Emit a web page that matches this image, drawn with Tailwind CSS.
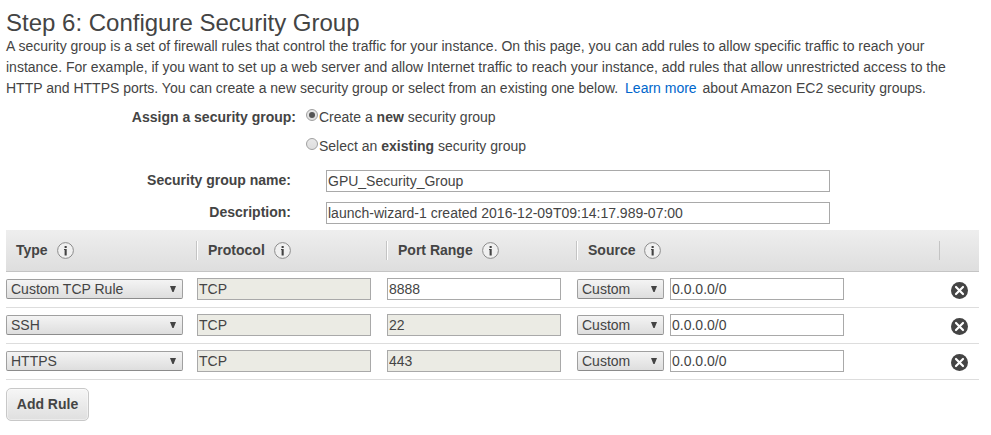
<!DOCTYPE html>
<html lang="en">
<head>
<meta charset="utf-8">
<title>Configure Security Group</title>
<script src="https://cdn.jsdelivr.net/npm/@tailwindcss/browser@4"></script>
</head>
<body class="bg-white text-[#444] text-sm leading-[21px] font-['Liberation_Sans',Arial,sans-serif] overflow-hidden">
<svg class="hidden">
  <symbol id="info" viewBox="0 0 17 17">
    <circle cx="8.5" cy="8.5" r="7.9" fill="#f0f0f0" stroke="#8c8c8c"/>
    <path d="M7.6 4h2.1v2H7.6zM7 7.1h2.7V13.4H7.6V8H7z" fill="#444"/>
  </symbol>
  <symbol id="remove" viewBox="0 0 17 17">
    <circle cx="8.5" cy="8.5" r="8.5" fill="#444"/>
    <path d="M5 5l7 7M12 5l-7 7" stroke="#fff" stroke-width="2.2" stroke-linecap="round"/>
  </symbol>
  <symbol id="arrow" viewBox="0 0 6 6"><path d="M0 0h6L3.6 6H2.4z" fill="#444"/></symbol>
</svg>
<main class="pl-1.5 pr-3 pt-[9px]">
  <h1 class="text-2xl leading-[27px]">Step 6: Configure Security Group</h1>
  <p class="whitespace-nowrap">A security group is a set of firewall rules that control the traffic for your instance. On this page, you can add rules to allow specific traffic to reach your<br>instance. For example, if you want to set up a web server and allow Internet traffic to reach your instance, add rules that allow unrestricted access to the<br>HTTP and HTTPS ports. You can create a new security group or select from an existing one below. <a href="#" class="text-[#0066cc] ml-[3px] mr-0.5">Learn more</a> about Amazon EC2 security groups.</p>

  <section class="h-[131px] pt-2">
    <div class="flex h-[29px]">
      <div class="w-[290px] text-right font-bold">Assign a security group:</div>
      <label class="flex ml-2.5"><span class="mt-[2px] mr-px size-3 rounded-full border border-[#a0a0a0] bg-linear-to-b from-[#e8e8e8] to-[#dedede] flex items-center justify-center"><i class="size-1.5 rounded-full bg-[#555]"></i></span><span>Create a <b>new</b> security group</span></label>
    </div>
    <div class="flex h-[26px]">
      <label class="flex ml-[300px]"><span class="mt-[2px] mr-px size-3 rounded-full border border-[#a0a0a0] bg-linear-to-b from-[#e8e8e8] to-[#dedede]"></span><span>Select an <b>existing</b> security group</span></label>
    </div>
    <div class="flex h-8 pt-2">
      <div class="w-[285px] text-right font-bold">Security group name:</div>
      <input class="ml-[35px] w-[504px] h-[22px] border border-[#a9a9a9] px-px" value="GPU_Security_Group">
    </div>
    <div class="flex h-8 pt-2">
      <div class="w-[285px] text-right font-bold">Description:</div>
      <input class="ml-[35px] w-[504px] h-[22px] border border-[#a9a9a9] px-px" value="launch-wizard-1 created 2016-12-09T09:14:17.989-07:00">
    </div>
  </section>

  <section id="rules">
    <div class="flex items-center h-[42px] bg-linear-to-b from-[#eee] to-[#dedede] border-b border-[#c4c4c4] font-bold">
      <div class="w-[190px] pl-2.5 h-[19px] flex items-center gap-[9px]">Type<svg class="size-[17px]"><use href="#info"/></svg></div>
      <div class="w-[190px] pl-[11px] h-[19px] flex items-center gap-[9px] border-l border-[#c4c4c4] shadow-[inset_1px_0_#fff]">Protocol<svg class="size-[17px]"><use href="#info"/></svg></div>
      <div class="w-[190px] pl-[11px] h-[19px] flex items-center gap-[9px] border-l border-[#c4c4c4] shadow-[inset_1px_0_#fff]">Port Range<svg class="size-[17px]"><use href="#info"/></svg></div>
      <div class="w-[363px] pl-[11px] h-[19px] flex items-center gap-[9px] border-l border-[#c4c4c4] shadow-[inset_1px_0_#fff]">Source<svg class="size-[17px]"><use href="#info"/></svg></div>
      <div class="h-[19px] border-l border-[#c4c4c4]"></div>
    </div>
    <template id="row">
      <div class="flex items-center h-9 pb-[2px] border-b border-[#ddd]">
        <button class="type w-[177px] h-5 mr-3.5 px-1 pr-[6px] flex items-center justify-between border border-[#a0a0a0] border-b-[#8c8c8c] rounded-xs bg-linear-to-b from-[#f4f4f4] to-[#dedede]"><span class="pt-[2px]"></span><svg class="size-1.5"><use href="#arrow"/></svg></button>
        <input class="w-[174px] h-[22px] mr-4 border border-[#a9a9a9] bg-[#ebebe4] px-px" disabled value="TCP">
        <input class="port w-[174px] h-[22px] mr-4 border border-[#a9a9a9] disabled:bg-[#ebebe4] px-px">
        <button class="w-[87px] h-5 mr-1.5 px-1 pr-[6px] flex items-center justify-between border border-[#a0a0a0] border-b-[#8c8c8c] rounded-xs bg-linear-to-b from-[#f4f4f4] to-[#dedede]"><span class="pt-[2px]">Custom</span><svg class="size-1.5"><use href="#arrow"/></svg></button>
        <input class="w-[174px] h-[22px] border border-[#a9a9a9] px-px" value="0.0.0.0/0">
        <svg class="size-[17px] ml-[107px] mt-[3px]"><use href="#remove"/></svg>
      </div>
    </template>
  </section>
  <button class="mt-2 w-[83px] h-[33px] rounded-[5px] border border-[#c8c8c8] bg-linear-to-b from-[#f6f6f6] to-[#dfdfdf] font-bold shadow-[inset_0_0_0_1px_rgba(255,255,255,0.4)]">Add Rule</button>
</main>
<script>
const row = document.getElementById('row');
[['Custom TCP Rule', '8888', false], ['SSH', '22', true], ['HTTPS', '443', true]].forEach(([type, port, fixed]) => {
  const n = row.content.cloneNode(true);
  n.querySelector('.type span').textContent = type;
  const p = n.querySelector('.port');
  p.value = port;
  p.disabled = fixed;
  document.getElementById('rules').appendChild(n);
});
</script>
</body>
</html>
